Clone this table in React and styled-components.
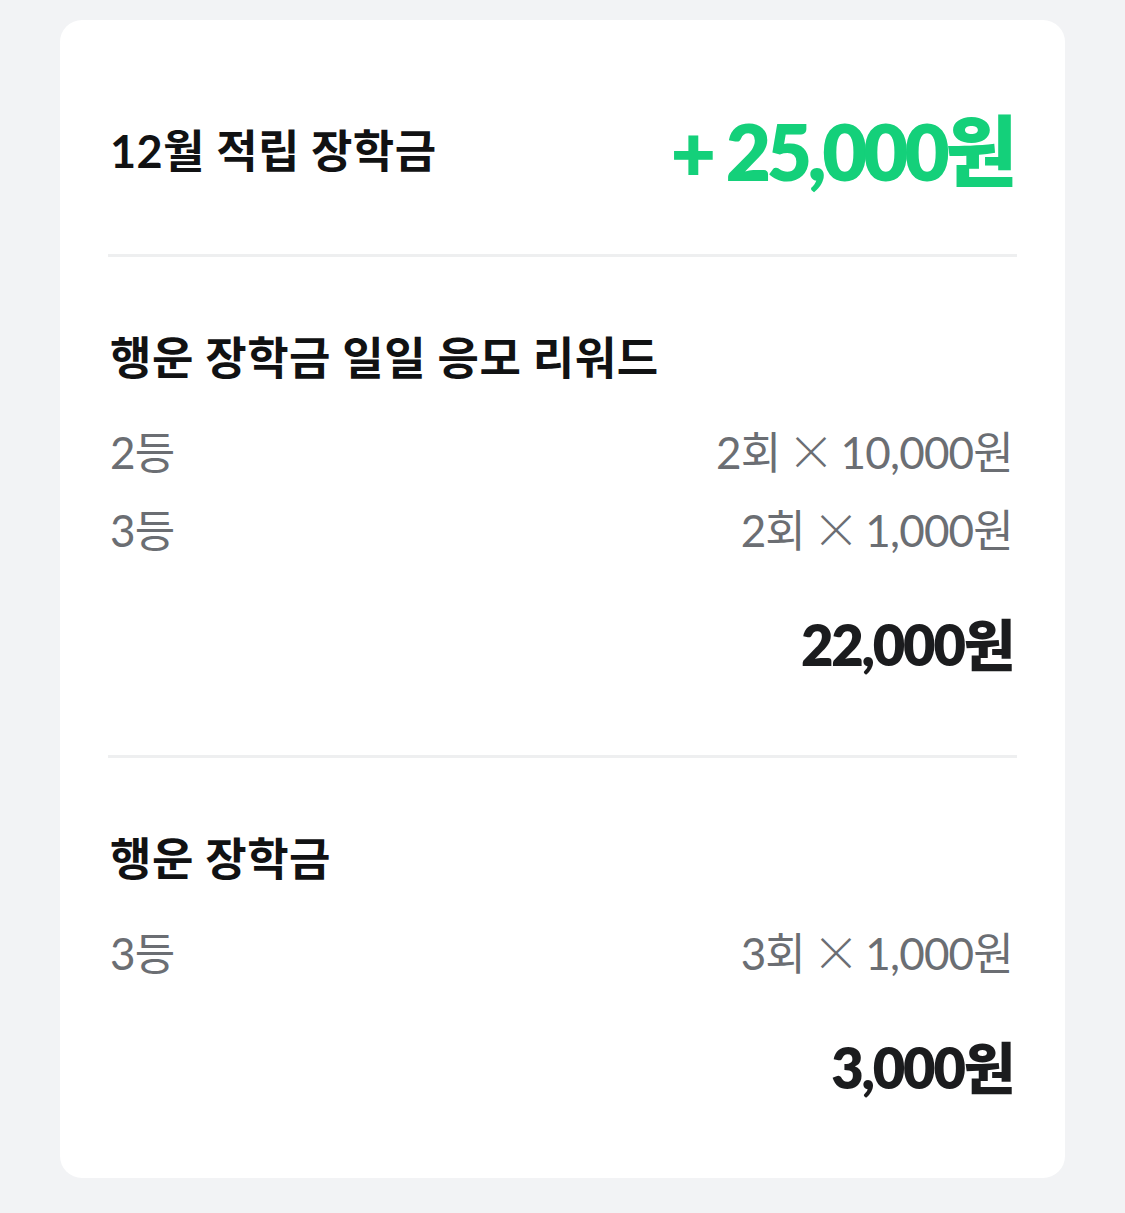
import React from "react";
import styled, { createGlobalStyle } from "styled-components";

const Global = createGlobalStyle`
  html, body { margin: 0; padding: 0; background: #f2f3f5; }
  body {
    font-family: Lato, "Noto Sans CJK KR", "Noto Sans", sans-serif;
    -webkit-font-smoothing: antialiased;
  }
`;

const Page = styled.div`
  padding: 20px 60px 36px;
`;

const Card = styled.div`
  background: #ffffff;
  border-radius: 22px;
  padding: 0 48px;
`;

const Header = styled.div`
  display: flex;
  align-items: center;
  justify-content: space-between;
  padding: 87px 4px 59px 2px;
  border-bottom: 3px solid #eeeff0;
`;

const HeaderTitle = styled.h1`
  margin: 0;
  font-size: 45px;
  line-height: 88px;
  font-weight: 700;
  color: #111213;
  letter-spacing: 0.4px;
`;

const Amount = styled.div`
  font-size: 78px;
  line-height: 88px;
  font-weight: 800;
  color: #14d07a;
  letter-spacing: -4.2px;
`;

const Plus = styled.span`
  margin-right: 14px;
`;

const Section = styled.section`
  padding: 71px 4px 75px 2px;
  border-bottom: ${(p) => (p.$last ? "none" : "3px solid #eeeff0")};
`;

const SectionTitle = styled.h2`
  margin: 0 0 34px;
  font-size: 45px;
  line-height: 60px;
  font-weight: 700;
  color: #111213;
  letter-spacing: 0.5px;
`;

const Rows = styled.div`
  display: flex;
  flex-direction: column;
  gap: 18px;
`;

const Row = styled.div`
  display: flex;
  justify-content: space-between;
  align-items: center;
  height: 60px;
  font-size: 44px;
  line-height: 60px;
  font-weight: 400;
  color: #6b6e73;
  letter-spacing: -0.8px;
`;

const Times = styled.span`
  display: inline-block;
  margin: 0 8px 0 9px;
  font-family: "Noto Sans CJK KR", sans-serif;
  font-weight: 300;
  font-size: 44px;
  line-height: 1;
  vertical-align: baseline;
  transform: translateY(-1px) scale(1.08);
`;

const Total = styled.div`
  margin-top: 50px;
  text-align: right;
  font-size: 56px;
  line-height: 70px;
  font-weight: 800;
  color: #1b1c1e;
  letter-spacing: -2.2px;
`;

const sections = [
  {
    title: "행운 장학금 일일 응모 리워드",
    rows: [
      { rank: "2등", count: "2회", unit: "10,000원" },
      { rank: "3등", count: "2회", unit: "1,000원" },
    ],
    total: "22,000원",
  },
  {
    title: "행운 장학금",
    rows: [{ rank: "3등", count: "3회", unit: "1,000원" }],
    total: "3,000원",
  },
];

export default function App() {
  return (
    <Page>
      <Global />
      <Card>
        <Header>
          <HeaderTitle>12월 적립 장학금</HeaderTitle>
          <Amount>
            <Plus>+</Plus>25,000원
          </Amount>
        </Header>
        {sections.map((s, i) => (
          <Section key={s.title} $last={i === sections.length - 1}>
            <SectionTitle>{s.title}</SectionTitle>
            <Rows>
              {s.rows.map((r) => (
                <Row key={r.rank + r.unit}>
                  <span>{r.rank}</span>
                  <span>
                    {r.count}
                    <Times>×</Times>
                    {r.unit}
                  </span>
                </Row>
              ))}
            </Rows>
            <Total>{s.total}</Total>
          </Section>
        ))}
      </Card>
    </Page>
  );
}
